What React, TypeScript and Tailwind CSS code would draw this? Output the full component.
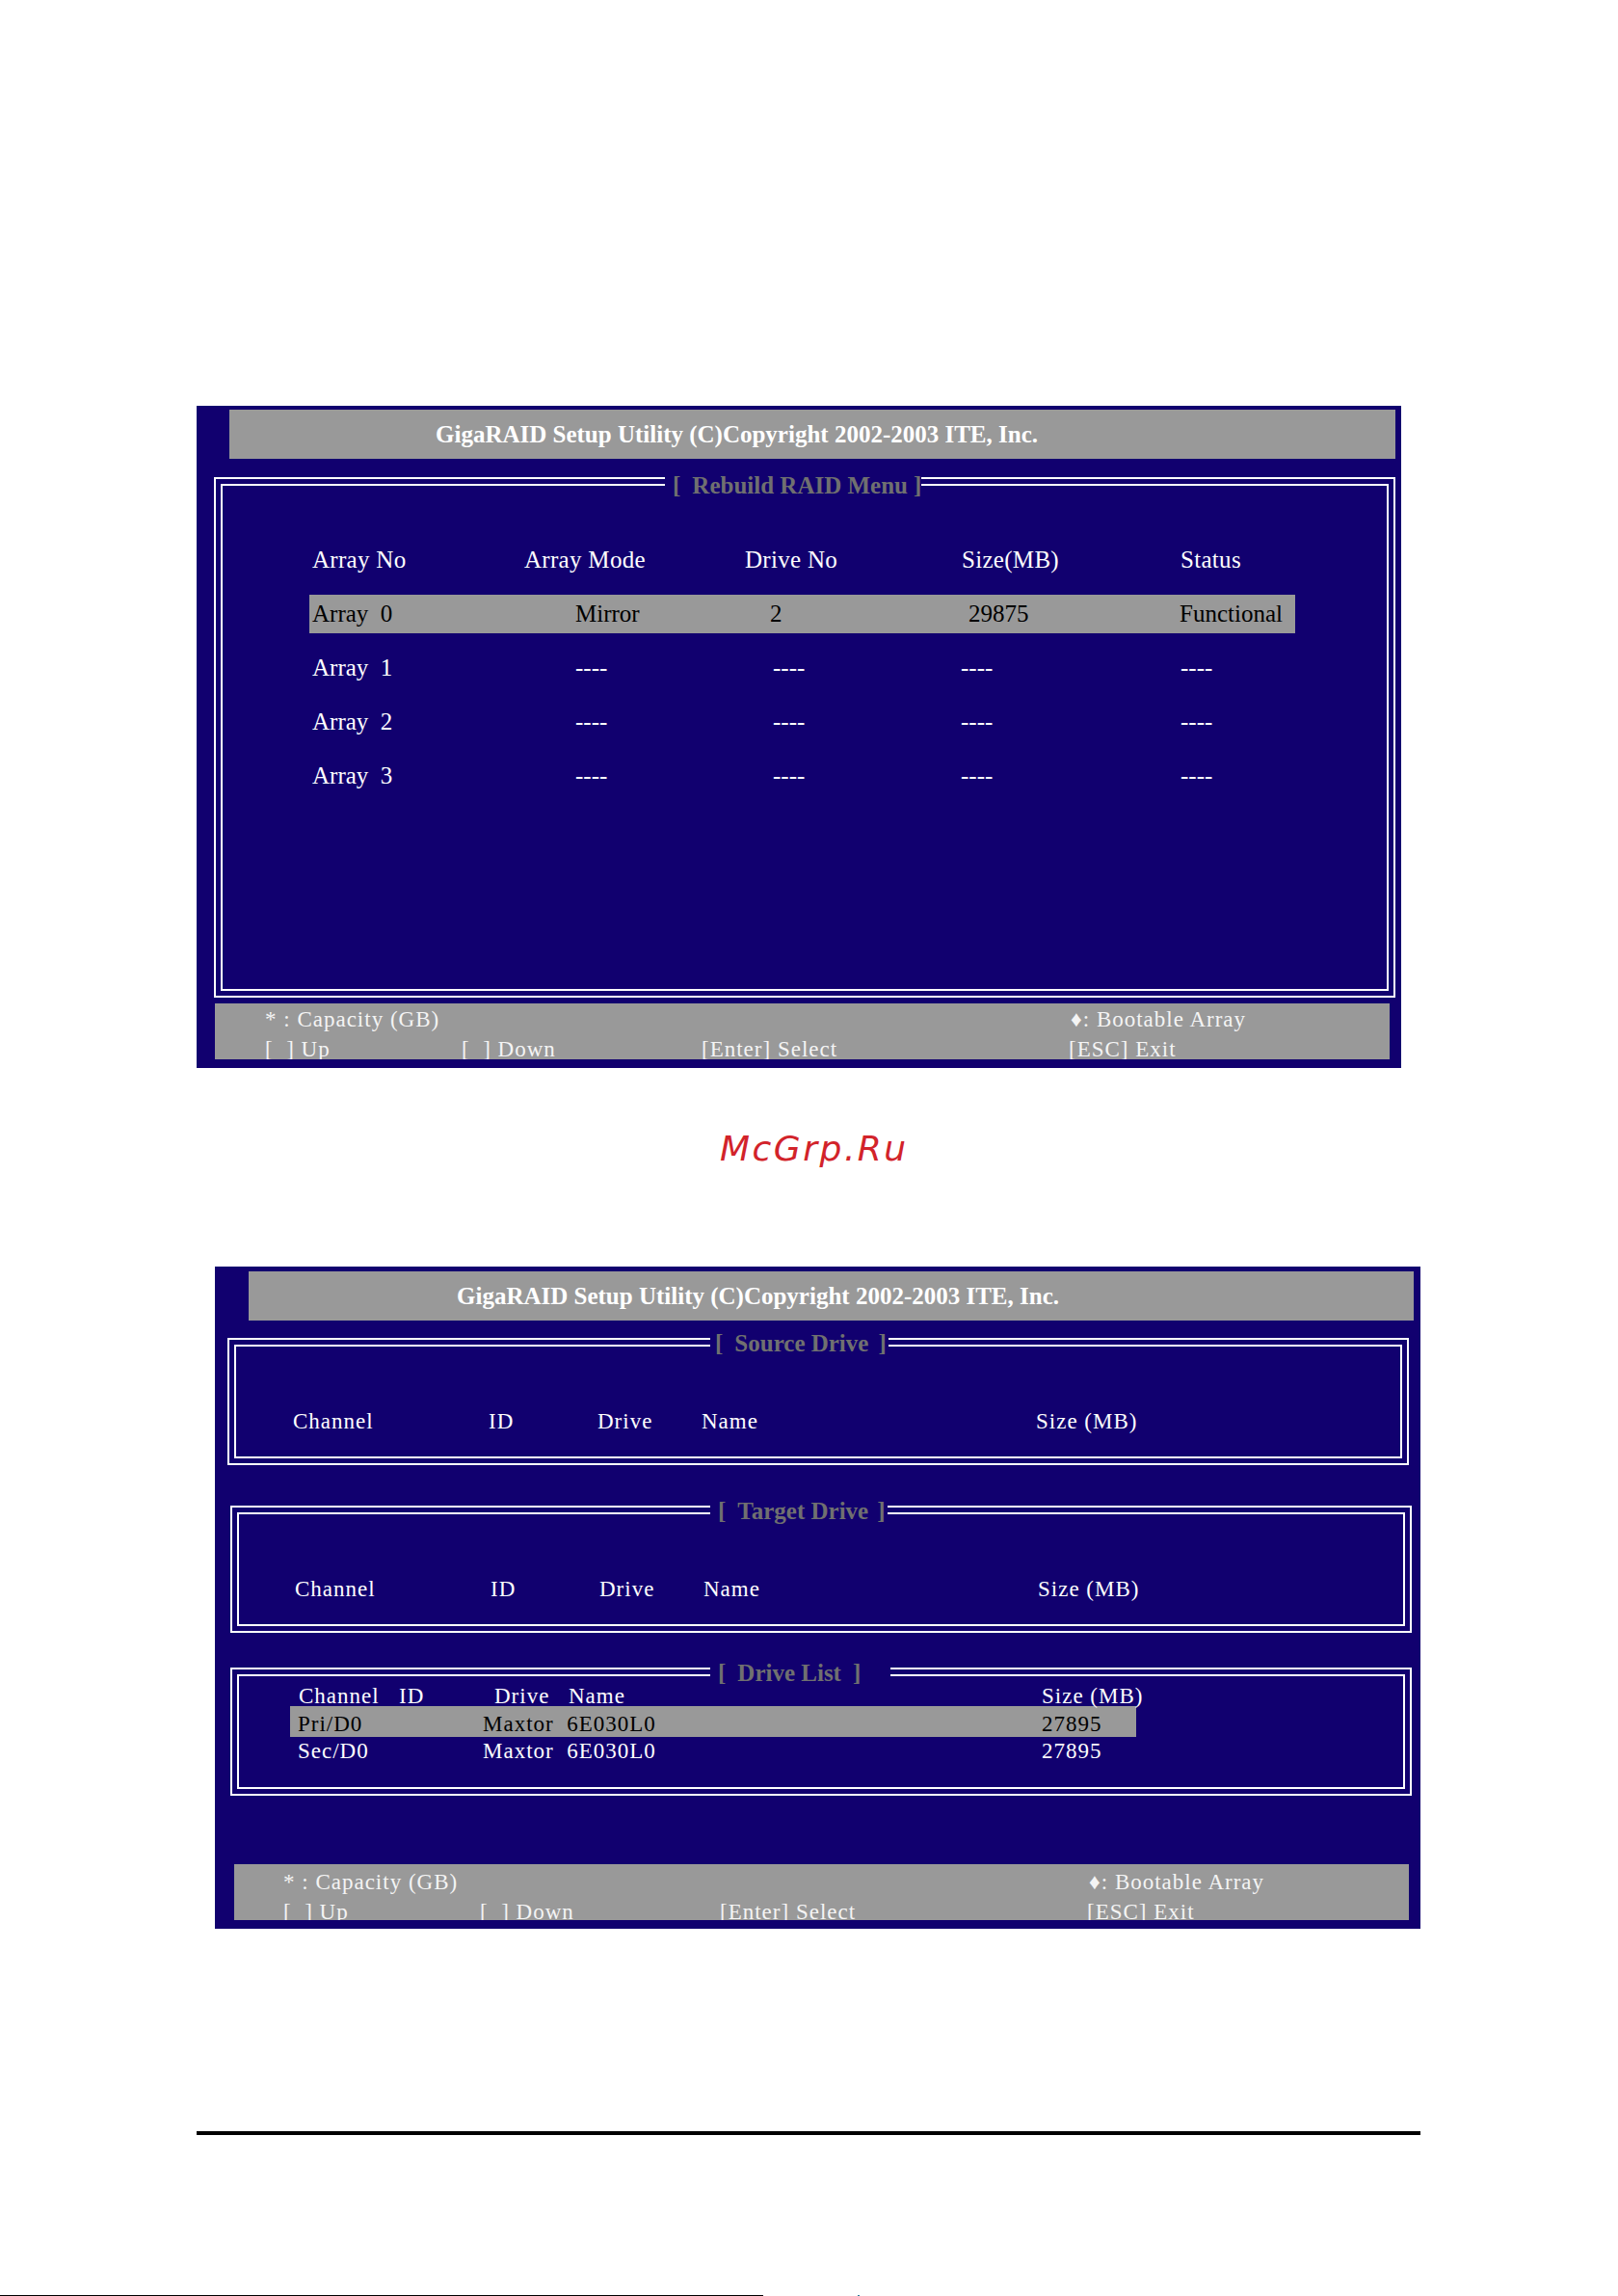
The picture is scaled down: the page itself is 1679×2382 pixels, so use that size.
import type { ReactNode } from "react";

type LegendProps = {
  label: string;
  box: string;
  lead: string;
  close: string;
};

// Gray title that sits on top of the double frame line
function Legend({ label, box, lead, close }: LegendProps) {
  return (
    <div
      className={`absolute flex items-start bg-[#11006f] text-[25px] leading-none font-bold text-[#707070] whitespace-nowrap ${box}`}
    >
      <span>[</span>
      <span className={lead}>{label}</span>
      <span className={close}>]</span>
    </div>
  );
}

function Frame({
  className,
  legend,
  children,
}: {
  className: string;
  legend: ReactNode;
  children: ReactNode;
}) {
  return (
    <div className={`relative border-2 border-white p-[5px] ${className}`}>
      <div className="h-full border-2 border-white">{children}</div>
      {legend}
    </div>
  );
}

function TitleBar({ className }: { className: string }) {
  return (
    <div
      className={`h-[51px] bg-[#999999] text-[25px] leading-[51px] font-bold text-white whitespace-nowrap ${className}`}
    >
      GigaRAID Setup Utility (C)Copyright 2002-2003 ITE, Inc.
    </div>
  );
}

function KeyBar({ className }: { className: string }) {
  return (
    <div
      className={`h-[58px] w-[1219px] overflow-hidden bg-[#999999] text-[23px] leading-[31px] tracking-[1px] text-[#f4f4f4] whitespace-nowrap ${className}`}
    >
      <div className="flex">
        <span className="w-[836px]">* : Capacity (GB)</span>
        <span>♦: Bootable Array</span>
      </div>
      <div className="flex">
        <span className="w-[204px]">[&nbsp;&nbsp;]&nbsp;Up</span>
        <span className="w-[249px]">[&nbsp;&nbsp;]&nbsp;Down</span>
        <span className="w-[381px]">[Enter] Select</span>
        <span>[ESC] Exit</span>
      </div>
    </div>
  );
}

const arrays = ["Array  1", "Array  2", "Array  3"];

function RebuildMenu() {
  return (
    <div className="ml-[204px] mt-[421px] flex h-[687px] w-[1250px] flex-col bg-[#11006f]">
      <TitleBar className="ml-[34px] mt-[4px] w-[1210px] pl-[214px]" />
      <Frame
        className="ml-[18px] mt-[19px] h-[540px] w-[1226px]"
        legend={
          <Legend
            label="Rebuild RAID Menu"
            box="left-[466px] -top-[6px] pl-[8px]"
            lead="ml-[12px]"
            close="ml-[6px]"
          />
        }
      >
        <div className="ml-[90px] flex flex-col gap-[16px] pt-[57px] text-[25px] leading-[40px] whitespace-pre">
          <div className="flex h-[40px] pl-[3px] tracking-[0.3px] text-white">
            <span className="w-[220px]">Array No</span>
            <span className="w-[229px]">Array Mode</span>
            <span className="w-[225px]">Drive No</span>
            <span className="w-[227px]">Size(MB)</span>
            <span>Status</span>
          </div>
          <div className="flex h-[40px] w-[1023px] bg-[#999999] pl-[3px] text-black">
            <span className="w-[273px]">Array  0</span>
            <span className="w-[202px]">Mirror</span>
            <span className="w-[206px]">2</span>
            <span className="w-[219px]">29875</span>
            <span>Functional</span>
          </div>
          {arrays.map((name) => (
            <div key={name} className="flex h-[40px] pl-[3px] text-white">
              <span className="w-[273px]">{name}</span>
              <span className="w-[205px]">----</span>
              <span className="w-[195px]">----</span>
              <span className="w-[228px]">----</span>
              <span>----</span>
            </div>
          ))}
        </div>
      </Frame>
      <KeyBar className="ml-[19px] mt-[6px] pl-[52px] pt-[1px]" />
    </div>
  );
}

function DriveHeader({ className }: { className: string }) {
  return (
    <div className={`flex pt-[63px] text-[23px] leading-[30px] tracking-[1px] text-white ${className}`}>
      <span className="w-[203px]">Channel</span>
      <span className="w-[113px]">ID</span>
      <span className="w-[108px]">Drive</span>
      <span className="w-[347px]">Name</span>
      <span>Size (MB)</span>
    </div>
  );
}

const drives = [
  { ch: "Pri/D0", name: "Maxtor  6E030L0", size: "27895" },
  { ch: "Sec/D0", name: "Maxtor  6E030L0", size: "27895" },
];

function CopyMenu() {
  return (
    <div className="ml-[223px] mt-[104px] flex h-[687px] w-[1251px] flex-col bg-[#11006f]">
      <TitleBar className="ml-[35px] mt-[5px] w-[1209px] pl-[216px]" />

      <Frame
        className="ml-[13px] mt-[18px] h-[132px] w-[1226px]"
        legend={
          <Legend
            label="Source Drive"
            box="left-[499px] -top-[9px] pl-[5px] pr-[2px]"
            lead="ml-[12px]"
            close="ml-[10px]"
          />
        }
      >
        <DriveHeader className="ml-[59px]" />
      </Frame>

      <Frame
        className="ml-[16px] mt-[42px] h-[132px] w-[1226px]"
        legend={
          <Legend
            label="Target Drive"
            box="left-[496px] -top-[9px] pl-[8px] pr-[2px]"
            lead="ml-[12px]"
            close="ml-[9px]"
          />
        }
      >
        <DriveHeader className="ml-[58px]" />
      </Frame>

      <Frame
        className="ml-[16px] mt-[36px] h-[133px] w-[1226px]"
        legend={
          <Legend
            label="Drive List"
            box="left-[496px] -top-[9px] pl-[8px] pr-[31px]"
            lead="ml-[12px]"
            close="ml-[12px]"
          />
        }
      >
        <div className="ml-[53px] pt-[6px] text-[23px] tracking-[1px] whitespace-pre">
          <div className="flex h-[25px] pl-[9px] leading-[30px] text-white">
            <span className="w-[104px]">Channel</span>
            <span className="w-[99px]">ID</span>
            <span className="w-[77px]">Drive</span>
            <span className="w-[491px]">Name</span>
            <span>Size (MB)</span>
          </div>
          {drives.map((d, i) => (
            <div
              key={d.ch}
              className={
                i === 0
                  ? "flex h-[32px] w-[878px] bg-[#999999] pl-[8px] leading-[38px] text-black"
                  : "flex h-[30px] pl-[8px] leading-[30px] text-white"
              }
            >
              <span className="w-[192px]">{d.ch}</span>
              <span className="w-[580px]">{d.name}</span>
              <span>{d.size}</span>
            </div>
          ))}
        </div>
      </Frame>

      <KeyBar className="ml-[20px] mt-[71px] pl-[51px] pt-[3px]" />
    </div>
  );
}

export default function App() {
  return (
    <div className="flex h-[2382px] w-[1679px] flex-col overflow-hidden bg-white font-['Liberation_Serif',serif]">
      <RebuildMenu />

      <div className="ml-[747px] mt-[66px] h-[36px] font-['DejaVu_Sans',sans-serif] text-[36px] leading-none italic tracking-[2.5px] text-[#d2232a]">
        McGrp.Ru
      </div>

      <CopyMenu />

      {/* page footer rule */}
      <div className="ml-[204px] mt-[210px] h-[4px] w-[1270px] bg-black" />

      <div className="mt-[166px] flex h-[1px] items-start">
        <div className="h-[1px] w-[792px] bg-black" />
        <div className="ml-[98px] h-[1px] w-[2px] bg-[#2a7f9a]" />
      </div>
    </div>
  );
}
